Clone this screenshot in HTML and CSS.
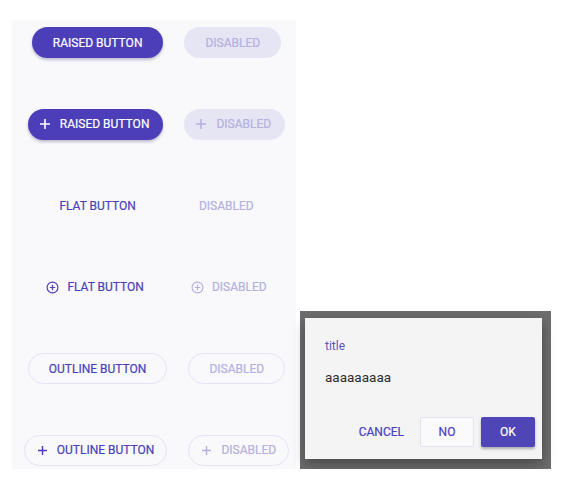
FILE: index.html
```html
<!DOCTYPE html>
<html>
<head>
<meta charset="utf-8">
<link rel="stylesheet" href="styles.css">
</head>
<body>
<div class="page">
  <div class="panel">
    <div class="row">
      <button class="btn raised">RAISED BUTTON</button>
      <button class="btn raised disabled">DISABLED</button>
    </div>
    <div class="row">
      <button class="btn raised with-icon"><svg class="plus" viewBox="0 0 10 10"><path d="M5 0V10M0 5H10"/></svg>RAISED BUTTON</button>
      <button class="btn raised disabled with-icon"><svg class="plus" viewBox="0 0 10 10"><path d="M5 0V10M0 5H10"/></svg>DISABLED</button>
    </div>
    <div class="row">
      <button class="btn flat">FLAT BUTTON</button>
      <button class="btn flat disabled">DISABLED</button>
    </div>
    <div class="row">
      <button class="btn flat flat-icon"><svg class="cplus" viewBox="0 0 24 24"><circle cx="12" cy="12" r="10"/><path d="M12 7V17M7 12H17"/></svg>FLAT BUTTON</button>
      <button class="btn flat flat-icon disabled"><svg class="cplus" viewBox="0 0 24 24"><circle cx="12" cy="12" r="10"/><path d="M12 7V17M7 12H17"/></svg>DISABLED</button>
    </div>
    <div class="row">
      <button class="btn outline">OUTLINE BUTTON</button>
      <button class="btn outline disabled">DISABLED</button>
    </div>
    <div class="row">
      <button class="btn outline outline-icon"><svg class="plus small" viewBox="0 0 10 10"><path d="M5 0V10M0 5H10"/></svg>OUTLINE BUTTON</button>
      <button class="btn outline outline-icon disabled"><svg class="plus small" viewBox="0 0 10 10"><path d="M5 0V10M0 5H10"/></svg>DISABLED</button>
    </div>
  </div>
  <div class="overlay">
    <div class="dialog">
      <div class="dialog-title">title</div>
      <div class="dialog-content">aaaaaaaaa</div>
      <div class="dialog-actions">
        <button class="dbtn dflat">CANCEL</button>
        <button class="dbtn doutline">NO</button>
        <button class="dbtn dfilled">OK</button>
      </div>
    </div>
  </div>
</div>
</body>
</html>
```
FILE: styles.css
```css
html, body {
  margin: 0;
  padding: 0;
  background: #ffffff;
  font-family: Roboto, "Liberation Sans", sans-serif;
}

.page {
  display: flex;
  align-items: flex-end;
  padding: 20px 0 0 12px;
}

.panel {
  width: 284px;
  height: 449px;
  box-sizing: border-box;
  background: #f9f9fb;
  display: flex;
  flex-direction: column;
  gap: 50.5px;
  padding: 7px 0 0 5px;
}

.row {
  height: 31px;
  display: flex;
  justify-content: center;
  align-items: center;
  gap: 21px;
}

.btn {
  box-sizing: border-box;
  height: 31px;
  display: flex;
  align-items: center;
  padding: 0 20px;
  border: 1px solid transparent;
  border-radius: 16px;
  font-family: Roboto, "Liberation Sans", sans-serif;
  font-weight: 400;
  -webkit-text-stroke: 0.2px currentColor;
  font-size: 12px;
  line-height: 14px;
  white-space: nowrap;
  background: transparent;
  cursor: pointer;
}

.raised {
  background: #4b3eb8;
  color: #ffffff;
  box-shadow: 0 2px 3px rgba(40, 30, 90, 0.28);
}

.raised.disabled {
  background: #e6e5f4;
  color: #b4b0e0;
  box-shadow: none;
}

.raised.with-icon {
  padding: 0 13px 0 11px;
}

.plus {
  width: 10px;
  height: 10px;
  margin-right: 10px;
  stroke: currentColor;
  stroke-width: 1.6;
  fill: none;
}

.plus.small {
  width: 9px;
  height: 9px;
  stroke-width: 1.6;
}

.flat {
  color: #4b3eb8;
}

.flat.disabled {
  color: #b4b0e0;
}

.flat.flat-icon {
  padding: 0 12px 0 12px;
}

.cplus {
  width: 13px;
  height: 13px;
  margin-right: 8px;
  stroke: currentColor;
  stroke-width: 2.2;
  fill: none;
}

.outline {
  border-color: #e4e2f4;
  color: #4b3eb8;
  background: transparent;
}

.outline.disabled {
  color: #b4b0e0;
}

.outline.outline-icon {
  padding: 0 12px 0 13px;
}

.overlay {
  margin-left: 4px;
  width: 251px;
  height: 158px;
  box-sizing: border-box;
  background: #6d6d6d;
  padding: 7px 9px 10px 5px;
}

.dialog {
  height: 141px;
  box-sizing: border-box;
  background: #f4f4f4;
  box-shadow: 0 5px 12px rgba(0, 0, 0, 0.35);
  display: flex;
  flex-direction: column;
  padding: 20px 0 0 0;
}

.dialog-title {
  padding: 0 20px;
  font-size: 12px;
  line-height: 16px;
  color: #5f54c2;
}

.dialog-content {
  margin-top: 13px;
  padding: 0 20px;
  font-size: 13.5px;
  line-height: 20px;
  color: #2e2e2e;
}

.dialog-actions {
  margin-top: auto;
  display: flex;
  justify-content: flex-end;
  gap: 7px;
  padding: 0 7px 12px 0;
}

.dbtn {
  box-sizing: border-box;
  height: 30px;
  min-width: 54px;
  padding: 0 8px;
  border: 1px solid transparent;
  border-radius: 2px;
  font-family: Roboto, "Liberation Sans", sans-serif;
  font-weight: 400;
  -webkit-text-stroke: 0.2px currentColor;
  font-size: 12px;
  color: #4b3eb8;
  background: transparent;
}

.doutline {
  background: #fafafa;
  border-color: #e4e2f4;
}

.dfilled {
  background: #5045b6;
  color: #ffffff;
  box-shadow: 0 2px 3px rgba(0, 0, 0, 0.3);
}
```
